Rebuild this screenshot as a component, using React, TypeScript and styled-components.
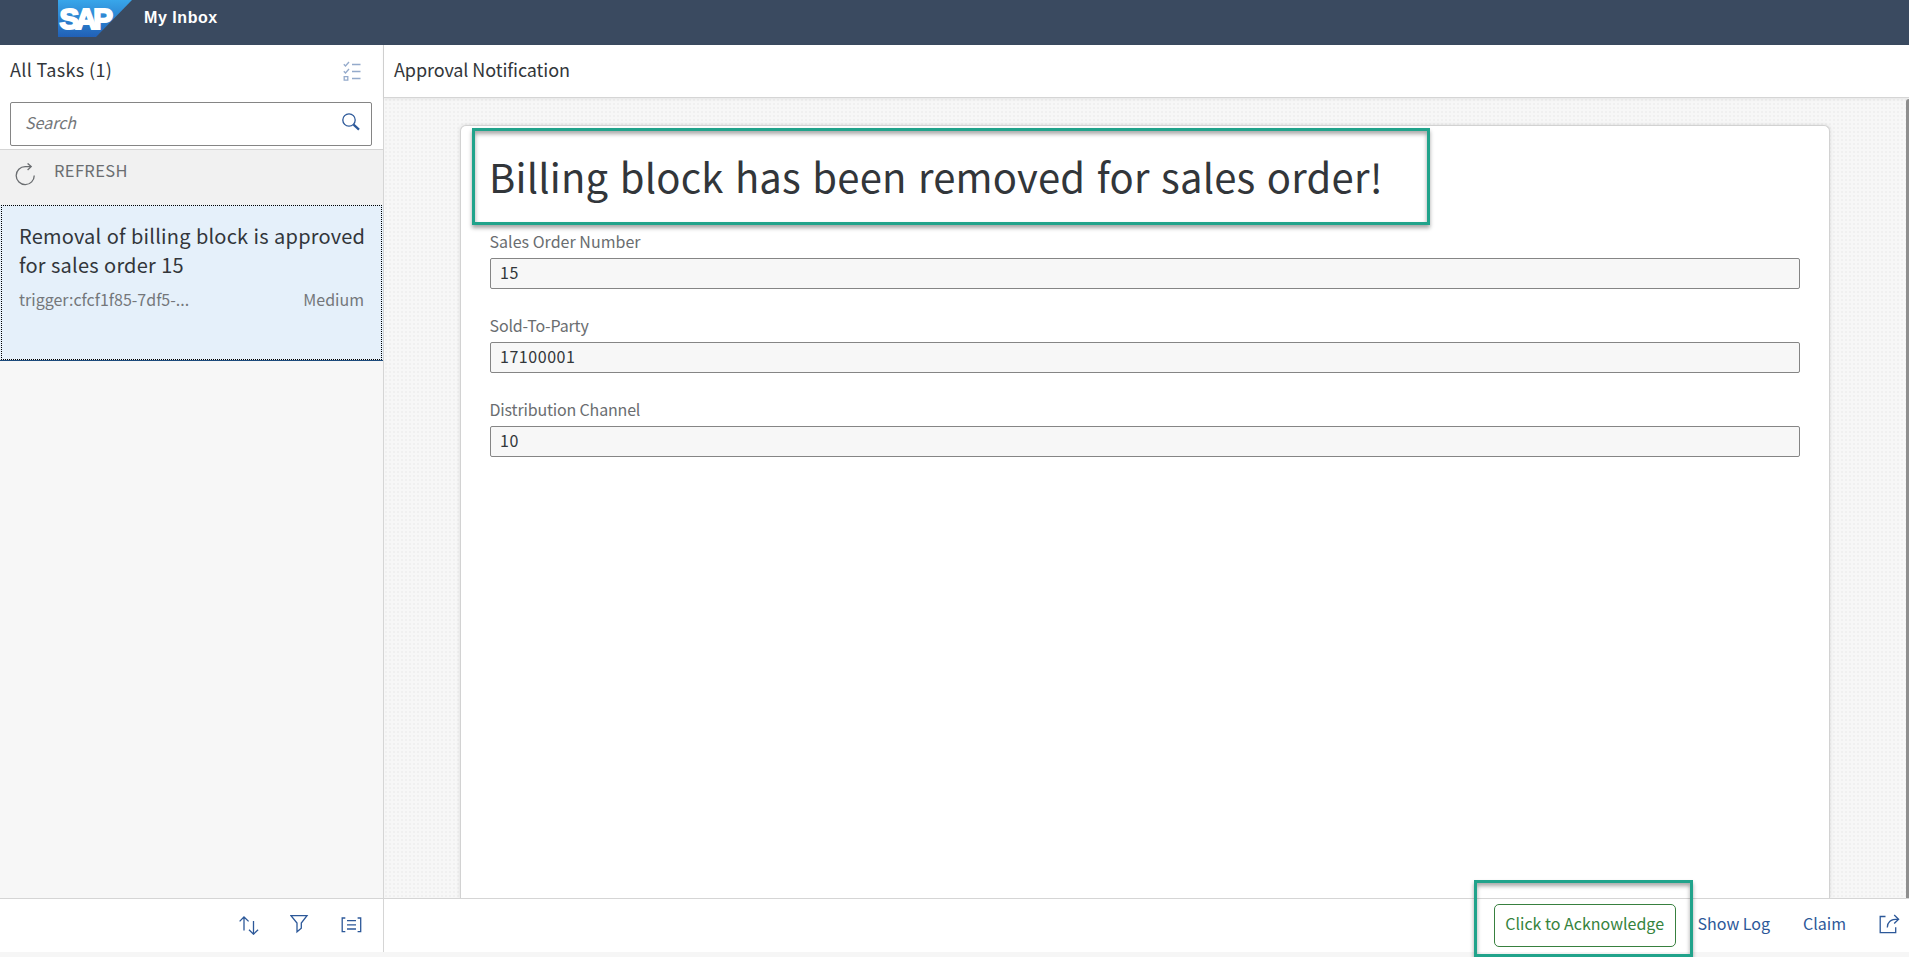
import React from "react";
import styled, { createGlobalStyle } from "styled-components";

const GlobalStyle = createGlobalStyle`
  *, *::before, *::after { box-sizing: border-box; }
  body {
    margin: 0;
    overflow: hidden;
    background: #f6f6f6;
    color: #32363a;
    font-family: "Noto Sans CJK SC", "Open Sans", sans-serif;
  }
`;

const Page = styled.div`
  position: relative;
  display: flex;
  flex-direction: column;
  height: 957px;
  padding-bottom: 5px;
  overflow: hidden;
`;

const Shell = styled.header`
  display: flex;
  flex: none;
  align-items: flex-start;
  gap: 12px;
  height: 45px;
  padding-left: 58px;
  background: #3a4a60;
`;

const AppTitle = styled.h1`
  margin: 0;
  padding-top: 5px;
  color: #fff;
  font: 700 16px/26px "Liberation Sans", Arial, sans-serif;
  letter-spacing: 0.55px;
`;

const Columns = styled.div`
  display: flex;
  flex: 1;
  min-height: 0;
`;

const MasterPane = styled.aside`
  display: flex;
  flex-direction: column;
  width: 384px;
  border-right: 1px solid #d5d5d5;
  background: #f7f7f7;
`;

const MasterHeader = styled.div`
  height: 105px;
  padding: 0 11px 0 10px;
  border-bottom: 1px solid #d5d5d5;
  background: #fff;
`;

const TitleRow = styled.div`
  display: flex;
  align-items: center;
  justify-content: space-between;
  height: 52px;
  padding: 0 11px 0 0;
`;

const PaneTitle = styled.h2<{ $tracking: number }>`
  margin: 0;
  padding-bottom: 4px;
  font-size: 18px;
  font-weight: 400;
  line-height: 26px;
  letter-spacing: ${(p) => p.$tracking}px;
`;

const SearchBox = styled.div`
  display: flex;
  align-items: center;
  justify-content: space-between;
  height: 44px;
  margin-top: 5px;
  padding: 0 11px 4px 14px;
  border: 1px solid #858585;
  border-radius: 2px;
  color: #74777a;
  font-size: 16px;
  font-style: italic;
`;

const RefreshRow = styled.div`
  display: flex;
  gap: 19px;
  height: 55px;
  padding: 7px 0 0 15px;
  background: #f1f1f1;
  color: #6a6d70;
  font-size: 16.5px;
  line-height: 26px;
  letter-spacing: 0.35px;

  svg {
    margin-top: 6px;
    stroke: #6a6d70;
  }
`;

const TaskItem = styled.article`
  height: 156px;
  padding: 0 0 0 1px;
  border-bottom: 1px solid #1d4b7c;
  background: #e5f0fa;
`;

const TaskFocus = styled.div`
  width: 381px;
  height: 155px;
  padding: 15px 17px 0 17px;
  border: 1px dotted #000;
`;

const TaskTitle = styled.h3`
  margin: 0;
  font-size: 20px;
  font-weight: 400;
  line-height: 29px;
  letter-spacing: 0.2px;
  word-spacing: 0.6px;
  white-space: nowrap;
`;

const TaskMeta = styled.div`
  display: flex;
  justify-content: space-between;
  margin-top: 8px;
  color: #74777a;
  font-size: 16px;
  line-height: 24px;
`;

const MasterFooter = styled.footer`
  display: flex;
  align-items: center;
  justify-content: flex-end;
  gap: 31px;
  height: 54px;
  margin-top: auto;
  padding: 0 21px 1px 0;
  border-top: 1px solid #d5d5d5;
  background: #fff;
`;

const DetailPane = styled.main`
  display: flex;
  flex: 1;
  flex-direction: column;
  min-width: 0;
`;

const DetailHeader = styled.div`
  z-index: 1;
  display: flex;
  flex: none;
  align-items: center;
  height: 53px;
  padding-left: 10px;
  border-bottom: 1px solid #d5d5d5;
  background: #fff;
  box-shadow: 0 1px 3px rgba(0, 0, 0, 0.08);
`;

const Canvas = styled.div`
  display: flex;
  flex: 1;
  min-height: 0;
  padding: 27px 0 0 76px;
  overflow: hidden;
  background-color: #f7f7f7;
  background-image: radial-gradient(circle at 2px 2px, #ebebeb 0, #f2f2f2 1px, transparent 1.5px);
  background-size: 4px 4px;
`;

const Card = styled.section`
  width: 1370px;
  padding: 20px 29px 0;
  border: 1px solid #d2d2d2;
  border-bottom: 0;
  border-radius: 6px 6px 0 0;
  background: #fff;
  box-shadow: 0 0 4px rgba(0, 0, 0, 0.12);
`;

const ScrollThumb = styled.div`
  width: 3px;
  margin: -26px 0 0 auto;
  border-radius: 3px 0 0 0;
  background: #8e8e8e;
`;

const Heading = styled.h2`
  margin: 0 0 25px -1px;
  font-size: 40px;
  font-weight: 400;
  line-height: 60px;
  letter-spacing: 0.2px;
  word-spacing: 2.2px;
  white-space: nowrap;
`;

const Field = styled.div`
  height: 84px;
`;

const Label = styled.label<{ $tracking: number }>`
  display: block;
  height: 27px;
  margin-left: -0.5px;
  color: #6a6d70;
  font-size: 16px;
  line-height: 20px;
  letter-spacing: ${(p) => p.$tracking}px;
`;

const ReadOnlyInput = styled.div`
  height: 31px;
  padding: 0 9px;
  border: 1px solid #858585;
  border-radius: 2px;
  background: #f7f7f7;
  font-size: 16px;
  line-height: 26px;
  letter-spacing: 0.55px;
`;

const DetailFooter = styled.footer`
  display: flex;
  flex: none;
  align-items: flex-start;
  justify-content: flex-end;
  height: 54px;
  padding: 5px 9px 0 0;
  border-top: 1px solid #d5d5d5;
  background: #fff;

  svg { margin: 10px 0 0 32px; }
`;

const Button = styled.button<{ $accept?: boolean; $gap?: number }>`
  height: 43px;
  margin: 0 0 0 ${(p) => p.$gap ?? 0}px;
  padding: ${(p) => (p.$accept ? "0 10.5px 5px" : "0 0 5px")};
  border: 1px solid ${(p) => (p.$accept ? "#38803f" : "transparent")};
  border-radius: 5px;
  background: none;
  color: ${(p) => (p.$accept ? "#36833d" : "#2c5899")};
  font: inherit;
  font-size: 16px;
  white-space: nowrap;
`;

const Highlight = styled.div<{ $x: number; $y: number; $w: number; $h: number }>`
  position: absolute;
  z-index: 2;
  left: ${(p) => p.$x}px;
  top: ${(p) => p.$y}px;
  width: ${(p) => p.$w}px;
  height: ${(p) => p.$h}px;
  border: 3px solid #21a38b;
  pointer-events: none;
  box-shadow: 0 3px 4px rgba(0, 0, 0, 0.35), inset 0 3px 4px rgba(0, 0, 0, 0.35);
`;

const LineIcon = styled.svg`
  display: block;
  flex: none;
  fill: none;
  stroke: #2c5899;
  stroke-width: 1.3;
`;

const Logo = () => (
  <svg width="74" height="37" viewBox="0 0 74 37">
    <defs>
      <linearGradient id="logoFill" x1="0" y1="0" x2="0" y2="1">
        <stop offset="0" stopColor="#38a6ea" />
        <stop offset="1" stopColor="#2160b6" />
      </linearGradient>
    </defs>
    <path d="M0 0H74L38 37H0z" fill="url(#logoFill)" />
    <text
      x="1.4"
      y="28.6"
      textLength="53.5"
      lengthAdjust="spacing"
      fontFamily="Liberation Sans, Arial, sans-serif"
      fontWeight="700"
      fontSize="29.5"
      fill="#fff"
      stroke="#fff"
      strokeWidth="2"
    >
      SAP
    </text>
  </svg>
);

const fields = [
  { label: "Sales Order Number", value: "15", tracking: 0.03 },
  { label: "Sold-To-Party", value: "17100001", tracking: -0.15 },
  { label: "Distribution Channel", value: "10", tracking: -0.17 },
];

export default function App() {
  return (
    <Page>
      <GlobalStyle />
      <Shell>
        <Logo />
        <AppTitle>My Inbox</AppTitle>
      </Shell>
      <Columns>
        <MasterPane>
          <MasterHeader>
            <TitleRow>
              <PaneTitle $tracking={0.35}>All Tasks (1)</PaneTitle>
              <LineIcon width="18" height="20" viewBox="0 0 18 20" opacity="0.5">
                <path d="M.8 3.2 2.5 5 6 1M.8 10.2 2.5 12 6 8M1.2 15.7h3.6v3.4H1.2zM9 3.5h8.5M9 10.5h8.5M9 17.5h8.5" />
              </LineIcon>
            </TitleRow>
            <SearchBox>
              Search
              <LineIcon width="18" height="18" viewBox="0 0 18 18">
                <circle cx="7" cy="7" r="6.2" />
                <path d="m11.6 11.6 5.4 5" strokeWidth="2.2" />
              </LineIcon>
            </SearchBox>
          </MasterHeader>
          <RefreshRow>
            <LineIcon width="20" height="23" viewBox="0 0 20 23">
              <path d="M19.2 12.4A9 9 0 1 1 10.2 3.6H16M12.6.4 16.2 3.6 12.6 7" />
            </LineIcon>
            REFRESH
          </RefreshRow>
          <TaskItem>
            <TaskFocus>
              <TaskTitle>
                Removal of billing block is approved
                <br />
                for sales order 15
              </TaskTitle>
              <TaskMeta>
                <span>trigger:cfcf1f85-7df5-...</span>
                <span>Medium</span>
              </TaskMeta>
            </TaskFocus>
          </TaskItem>
          <MasterFooter>
            <LineIcon width="20" height="20" viewBox="0 0 20 20">
              <path d="M5 15.5V2M.6 6.4 5 2l4.6 4.4M14.5 6v13.2M10 14.8l4.5 4.4 4.6-4.4" />
            </LineIcon>
            <LineIcon width="20" height="24" viewBox="0 0 20 24">
              <path d="M1 2.7h16L11.3 10v5.2L7 18.8V10z" />
            </LineIcon>
            <LineIcon width="21" height="16" viewBox="0 0 21 16">
              <path d="M4.3 1H1.2v13.6h3.1M16.6 1h3.1v13.6h-3.1M6 3.6h9M6 7.8h9M6 12h9" />
            </LineIcon>
          </MasterFooter>
        </MasterPane>
        <DetailPane>
          <DetailHeader>
            <PaneTitle $tracking={-0.09}>Approval Notification</PaneTitle>
          </DetailHeader>
          <Canvas>
            <Card>
              <Heading>Billing block has been removed for sales order!</Heading>
              {fields.map((f) => (
                <Field key={f.label}>
                  <Label $tracking={f.tracking}>{f.label}</Label>
                  <ReadOnlyInput>{f.value}</ReadOnlyInput>
                </Field>
              ))}
            </Card>
            <ScrollThumb />
          </Canvas>
          <DetailFooter>
            <Button $accept>Click to Acknowledge</Button>
            <Button $gap={21}>Show Log</Button>
            <Button $gap={31}>Claim</Button>
            <LineIcon width="21" height="20" viewBox="0 0 21 20">
              <path d="M6.5 2.5H1.2v16.2h15.5v-5.5M8.3 13.5C8.3 8.5 11 5.2 19.4 5.2M15.2 1l4.4 4.2-4.4 4.3" />
            </LineIcon>
          </DetailFooter>
        </DetailPane>
      </Columns>
      <Highlight $x={472} $y={128} $w={958} $h={97} />
      <Highlight $x={1474} $y={880} $w={219} $h={77} />
    </Page>
  );
}
